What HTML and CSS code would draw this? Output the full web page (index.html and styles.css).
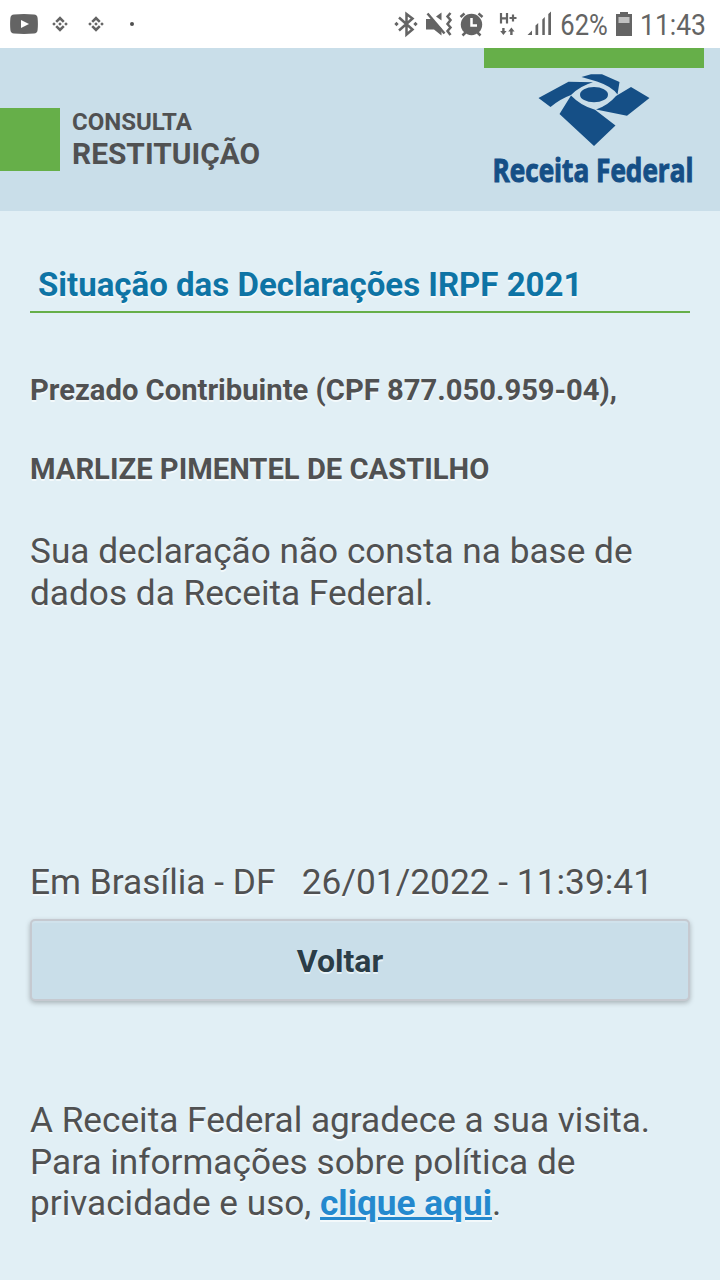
FILE: index.html
```html
<!DOCTYPE html>
<html lang="pt-BR">
    <head>
        <meta charset="UTF-8" />
        <meta name="viewport" content="width=device-width, initial-scale=1.0" />
        <title>Consulta Restituição</title>
        <link rel="stylesheet" href="styles.css">
    </head>
    <body>
        <div class="status-bar">
            <div class="status-group">
                <svg class="icon" width="28" height="20" viewBox="0 0 28 20">
                    <path d="M4 .4Q14-.4 24 .4Q27.300.6 27.600 4Q28.200 10 27.600 16Q27.300 19.400 24 19.600Q14 20.400 4 19.600Q.7 19.400.4 16Q-.2 10 .4 4Q.7.6 4 .4Z" />
                    <path class="light" d="M11 6v8l8-4z" />
                </svg>
                <svg class="icon coin" width="16" height="16" viewBox="0 0 16 16">
                    <path d="M8 .3L12.700 5l-1.800 1.800L8 3.900 5.100 6.800 3.300 5zM8 15.700L3.300 11l1.800-1.800L8 12.100l2.900-2.900 1.800 1.800zM8 6.200L9.800 8 8 9.800 6.200 8zM2 6.200L3.800 8 2 9.800.2 8zM14 6.200L15.800 8 14 9.800 12.200 8z" />
                </svg>
                <svg class="icon coin" width="16" height="16" viewBox="0 0 16 16">
                    <path d="M8 .3L12.700 5l-1.800 1.800L8 3.900 5.100 6.800 3.300 5zM8 15.700L3.300 11l1.800-1.800L8 12.100l2.900-2.900 1.800 1.800zM8 6.200L9.800 8 8 9.800 6.200 8zM2 6.200L3.800 8 2 9.800.2 8zM14 6.200L15.800 8 14 9.800 12.200 8z" />
                </svg>
                <span class="dot"></span>
            </div>
            <div class="status-group">
                <!-- bluetooth -->
                <svg class="icon" width="30" height="48" viewBox="391 0 30 48">
                    <path class="line" d="M399 17.500l13.500 12-6 5V14l6 4.500-13.500 12" />
                    <path d="M394.300 24l2.200-2.200 2.200 2.200-2.200 2.200zM413.300 24l2.200-2.200 2.200 2.200-2.200 2.200z" />
                </svg>
                <!-- mute + vibrate -->
                <svg class="icon" width="33" height="48" viewBox="421 0 33 48">
                    <path d="M426 19h6.500L441.500 28.500V35.500L434 29.500H426zM436 16.500l5.500-4v8z" />
                    <path class="line" d="M427.500 13.500l17 20" />
                    <path class="line" d="M450.500 13l-3 3.500 3 3.500-3 4 3 3.500-3 3.500 3 4" />
                </svg>
                <!-- alarm -->
                <svg class="icon" width="32" height="48" viewBox="454 0 32 48">
                    <circle cx="471.500" cy="24.500" r="10.700" />
                    <path class="line" d="M460.500 17l4-3.500M478.500 13.500l4 3.500M465.500 32.500l-3 3M477.500 32.500l3 3" />
                    <path class="hand" d="M471.500 18v7.500h5.500" />
                </svg>
                <!-- mobile data -->
                <svg class="icon" width="36" height="48" viewBox="486 0 36 48">
                    <path class="thin" d="M501 13v10.500M507 13v10.500M501 18.300h6M509.500 18h7M513 14.500v7" />
                    <path d="M502.200 28h2.400v3h2l-3.200 4-3.200-4h2zM510.200 35h2.400V31.500h2l-3.200-4-3.200 4h2z" />
                </svg>
                <!-- signal -->
                <svg class="icon" width="34" height="48" viewBox="522 0 34 48">
                    <path d="M527.500 35l4.500-4.500V35zM535.500 25.500l2.700-2.500v12h-2.700zM542.300 19.500l2.500-2.500v18h-2.500zM548.300 14l2.700-2.500V35h-2.700z" />
                </svg>
                <svg class="icon" width="56" height="48" viewBox="556 0 56 48">
                    <text class="status-text" x="560.300" y="35" textLength="47.500" lengthAdjust="spacingAndGlyphs">62%</text>
                </svg>
                <!-- battery -->
                <svg class="icon" width="24" height="48" viewBox="612 0 24 48">
                    <path d="M620 12h8v2h4v22h-16V14h4z" />
                    <path class="empty" d="M618.500 17h11v6h-11z" />
                </svg>
                <svg class="icon" width="84" height="48" viewBox="636 0 84 48">
                    <text class="status-text" x="640" y="35" textLength="66" lengthAdjust="spacingAndGlyphs">11:43</text>
                </svg>
            </div>
        </div>

        <header class="header">
            <div class="service">
                <span class="service-mark"></span>
                <h1 class="service-name"><small>CONSULTA</small>RESTITUIÇÃO</h1>
            </div>
            <div class="brand">
                <svg class="logo" width="220" height="120" viewBox="484 68 220 120">
                    <path d="M538.500 98L568.500 81.800 593 82.300Q580 86 571 95 560 99 550.500 107Z" />
                    <path d="M581.500 77L591 74.300H602L619.500 82 617.500 94.500Q612 86.500 597 81.500Z" />
                    <ellipse cx="594" cy="94.700" rx="14" ry="7.600" />
                    <path d="M631 87L649.500 98 627 115.800 596 109.500Q608 105.500 616 96Z" />
                    <path d="M571 95.500Q581 106 595 109.700L615.500 125.500 594 146 559.500 114Z" />
                    <text class="logo-text" x="492.500" y="182" textLength="201" lengthAdjust="spacingAndGlyphs">Receita Federal</text>
                </svg>
            </div>
        </header>

        <main class="content">
            <h2>Situação das Declarações IRPF 2021</h2>
            <p class="person">Prezado Contribuinte (CPF 877.050.959-04),</p>
            <p class="person">MARLIZE PIMENTEL DE CASTILHO</p>
            <p class="message">Sua declaração não consta na base de dados da Receita Federal.</p>
            <p class="date">Em Brasília - DF &nbsp; 26/01/2022 - 11:39:41</p>
            <button class="back">Voltar</button>
            <p class="thanks">A Receita Federal agradece a sua visita. Para informações sobre política de privacidade e uso, <a href="#">clique aqui</a>.</p>
        </main>
    </body>
</html>
```
FILE: styles.css
```css
body {
    font-family: Roboto, "Liberation Sans", sans-serif;
    margin: 0;
    height: 1280px;
    overflow: hidden;
    background-color: #e1eff5;
    color: #505152;
}
.status-bar {
    display: flex;
    justify-content: space-between;
    height: 48px;
    background: #fff;
}
.status-group {
    display: flex;
    align-items: center;
}
.status-group:first-child {
    padding-left: 10px;
}
.icon {
    fill: #646464;
    flex: none;
}
.icon .light {
    fill: #fff;
}
.icon .empty {
    fill: #c0c0c0;
}
.icon .line,
.icon .thin,
.icon .hand {
    fill: none;
    stroke: #646464;
    stroke-width: 2.5;
}
.icon .thin {
    stroke-width: 2.2;
}
.icon .hand {
    stroke: #fff;
}
.coin {
    margin-left: 14px;
}
.coin + .coin {
    margin-left: 20px;
}
.dot {
    width: 4px;
    height: 4px;
    margin-left: 26px;
    border-radius: 50%;
    background: #505050;
}
.status-text {
    font-size: 30px;
}
.header {
    display: flex;
    justify-content: space-between;
    height: 163px;
    background: #c9dee9;
}
.service {
    display: flex;
    align-items: flex-start;
    padding-top: 60px;
}
.service-mark {
    width: 60px;
    height: 63px;
    background: #66af49;
}
.service-name {
    margin: 0 0 0 12px;
    font-size: 29.900px;
    line-height: 35px;
}
.service-name small {
    display: block;
    font-size: 24px;
    line-height: 28px;
}
.brand {
    width: 220px;
    margin-right: 16px;
}
.brand::before {
    content: "";
    display: block;
    height: 20px;
    background: #66af49;
}
.logo {
    display: block;
    fill: #154f86;
}
.logo-text {
    font-family: "Open Sans", "Noto Sans", sans-serif;
    font-size: 32px;
    font-weight: bold;
    stroke: #154f86;
    stroke-width: 1;
}
.content {
    padding: 55px 30px 0;
    text-shadow: 0 2px 0 #f3f9fb;
}
h2 {
    margin: 0 0 60px;
    padding: 0 8px 7px;
    border-bottom: 2px solid #66af49;
    font-size: 33px;
    line-height: 38px;
    color: #0e74a5;
}
p {
    margin: 0;
    font-size: 35.2px;
    line-height: 41.5px;
}
.person {
    margin-bottom: 45px;
    font-size: 29.2px;
    line-height: 34px;
    font-weight: bold;
}
.message {
    height: 331px;
}
.date {
    margin-bottom: 15.500px;
    font-size: 35.3px;
}
.back {
    display: block;
    width: 100%;
    height: 82px;
    margin-bottom: 99px;
    padding: 2px 40px 0 0;
    border: 2px solid #c5c9d0;
    border-radius: 5px;
    background: #c9dee9;
    box-shadow: 0 2px 5px rgba(0, 0, 0, 0.25), inset 0 2px 0 #d0e2ec;
    font-family: inherit;
    font-size: 32px;
    font-weight: bold;
    color: #2b3d47;
    text-shadow: 0 2px 0 #e8f3f8;
}
.thanks a {
    font-weight: bold;
    color: #2489ce;
}
```
